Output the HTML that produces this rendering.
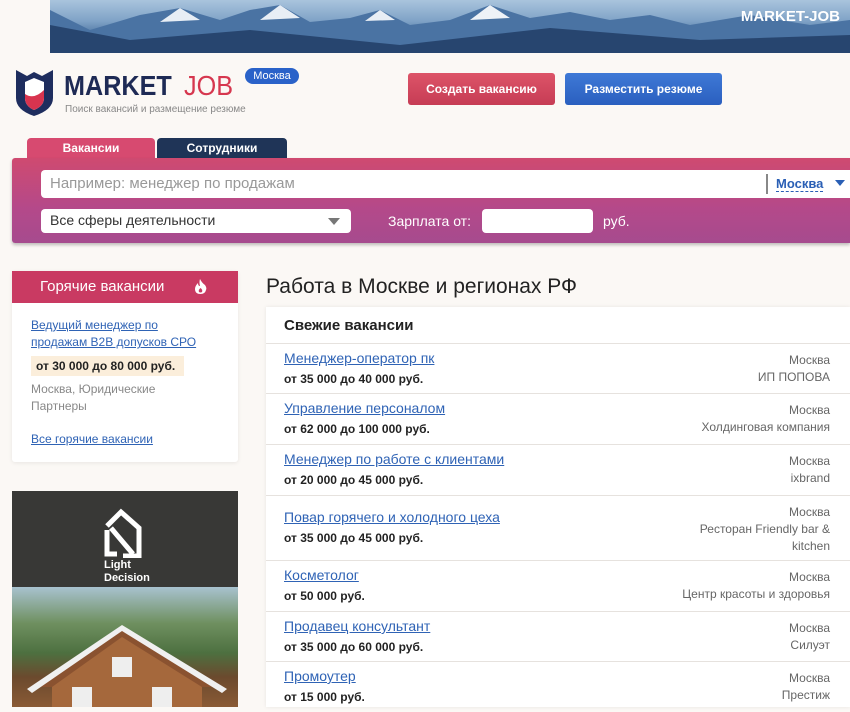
<!DOCTYPE html>
<html><head><meta charset="utf-8"><style>
*{margin:0;padding:0;box-sizing:border-box}
body{width:850px;height:707px;overflow:hidden;background:#fbf8f5;font-family:"Liberation Sans","Noto Sans CJK SC",sans-serif;position:relative}
.a{position:absolute}
.banner{left:50px;top:0;width:800px;height:53px;background:linear-gradient(180deg,#a9c4dd 0%,#7fa2c6 40%,#3d6797 75%,#2b4f7e 100%);overflow:hidden}
.btn{top:73px;height:32px;border-radius:3px;color:#fff;font-size:12px;font-weight:bold;text-align:center;line-height:32px}
a,.lnk{color:#2f63b5;text-decoration:underline}
.row{position:absolute;left:0;width:584px;border-top:1px solid #e6e2de}
.row .t{position:absolute;left:18px;top:6px;font-size:14px;color:#2f63b5;text-decoration:underline}
.row .s{position:absolute;left:18px;top:28px;font-size:12px;font-weight:bold;color:#222}
.row .r{position:absolute;right:20px;top:8px;font-size:12px;color:#666;text-align:right;line-height:17px}
</style></head><body>
<div class="a banner">
<svg width="800" height="53" style="position:absolute;left:0;top:0"><polygon points="0,10 40,30 90,15 130,8 170,20 200,10 230,5 260,22 300,18 330,10 360,25 400,20 440,5 480,18 520,12 560,20 600,15 640,25 700,15 760,25 800,20 800,53 0,53" fill="#4a73a3"/><polygon points="0,25 80,40 200,30 350,45 500,28 650,40 800,35 800,53 0,53" fill="#27456f"/><polygon points="130,8 150,20 110,22" fill="#e8eef5"/><polygon points="230,5 250,18 210,20" fill="#e8eef5"/><polygon points="440,5 460,18 420,20" fill="#eef2f7"/><polygon points="330,10 345,20 315,21" fill="#e8eef5"/></svg>
<div class="a" style="right:10px;top:8px;color:#fff;font-weight:bold;font-size:15px">MARKET-JOB</div>
</div>
<svg class="a" style="left:16px;top:70px" width="37" height="46" viewBox="0 0 37 46"><path d="M0 0 L11 6 L18 2 L26 6 L37 0 L37 28 Q37 40 18 46 Q0 40 0 28Z" fill="#1e2d5e"/><path d="M9 12 L18 8 L28 12 L28 28 Q28 36 18 40 Q9 36 9 28Z" fill="#fff"/><path d="M9 24 Q18 30 28 20 L28 28 Q28 36 18 40 Q9 36 9 28Z" fill="#d8344f"/></svg>
<div class="a" style="left:64px;top:71px;font-size:28px;line-height:30px;color:#1e2a55;font-weight:bold;transform:scaleX(0.9);transform-origin:left">MARKET</div>
<div class="a" style="left:184px;top:71px;font-size:28px;line-height:30px;color:#d6374f;transform:scaleX(0.9);transform-origin:left">JOB</div>
<div class="a" style="left:245px;top:68px;width:54px;height:16px;border-radius:8px;background:#2a62c9;color:#fff;font-size:11px;text-align:center;line-height:16px">Москва</div>
<div class="a" style="left:65px;top:104px;font-size:10px;color:#888">Поиск вакансий и размещение резюме</div>
<div class="a btn" style="left:408px;width:147px;background:linear-gradient(#dd5468,#c63c55)">Создать вакансию</div>
<div class="a btn" style="left:565px;width:157px;background:linear-gradient(#3f79d6,#2a5fbf)">Разместить резюме</div>
<div class="a" style="left:27px;top:138px;width:128px;height:21px;background:#d74a70;border-radius:4px 4px 0 0;color:#fff;font-size:12px;font-weight:bold;text-align:center;line-height:21px">Вакансии</div>
<div class="a" style="left:157px;top:138px;width:130px;height:20px;background:#1f3457;border-radius:4px 4px 0 0;color:#fff;font-size:12px;font-weight:bold;text-align:center;line-height:20px">Сотрудники</div>
<div class="a" style="left:12px;top:158px;width:838px;height:85px;background:linear-gradient(180deg,#cf4a70 0%,#b4498a 60%,#a64b8e 100%);border-radius:3px 0 0 3px;box-shadow:0 2px 3px rgba(0,0,0,.25)"></div>
<div class="a" style="left:41px;top:170px;width:809px;height:28px;background:#fff;border-radius:4px 0 0 4px"></div>
<div class="a" style="left:50px;top:175px;font-size:15px;color:#999">Например: менеджер по продажам</div>
<div class="a" style="left:766px;top:174px;width:2px;height:20px;background:#888"></div>
<div class="a" style="left:776px;top:176px;font-size:13px;font-weight:bold;color:#2a5fb5;border-bottom:1px dashed #2a5fb5">Москва</div>
<div class="a" style="left:835px;top:180px;width:0;height:0;border-left:5px solid transparent;border-right:5px solid transparent;border-top:6px solid #2a5fb5"></div>
<div class="a" style="left:41px;top:209px;width:310px;height:24px;background:#fff;border-radius:4px"></div>
<div class="a" style="left:50px;top:212px;font-size:14px;color:#333">Все сферы деятельности</div>
<div class="a" style="left:328px;top:218px;width:0;height:0;border-left:6px solid transparent;border-right:6px solid transparent;border-top:7px solid #777"></div>
<div class="a" style="left:388px;top:213px;font-size:14px;color:#fff">Зарплата от:</div>
<div class="a" style="left:482px;top:209px;width:111px;height:24px;background:#fff;border-radius:4px"></div>
<div class="a" style="left:603px;top:213px;font-size:14px;color:#fff">руб.</div>

<div class="a" style="left:12px;top:271px;width:226px;height:191px;background:#fff;border-radius:3px;box-shadow:0 1px 4px rgba(0,0,0,.08)"></div>
<div class="a" style="left:12px;top:271px;width:226px;height:32px;background:#c93a62;color:#fff;font-size:15px;line-height:32px;padding-left:28px">Горячие вакансии</div>
<svg class="a" style="left:194px;top:279px" width="13" height="15" viewBox="0 0 13 15"><path d="M6 0 Q8 4 11 6 Q13 9 12 11 Q11 15 6.5 15 Q1 15 1 10 Q1 7 4 4 Q4 7 6 7 Q5 3 6 0Z" fill="#fff"/><path d="M6.5 9 Q9 11 8 13 Q6.5 14 5 13 Q4 11 6.5 9Z" fill="#c93a62"/></svg>
<div class="a lnk" style="left:31px;top:317px;font-size:12px;line-height:17px">Ведущий менеджер по<br>продажам B2B допусков СРО</div>
<div class="a" style="left:31px;top:356px;width:153px;height:20px;background:#fbeedb;font-size:12px;font-weight:bold;line-height:20px;padding-left:5px;color:#222">от 30 000 до 80 000 руб.</div>
<div class="a" style="left:31px;top:381px;font-size:12px;line-height:17px;color:#888">Москва, Юридические<br>Партнеры</div>
<div class="a lnk" style="left:31px;top:432px;font-size:12px">Все горячие вакансии</div>

<div class="a" style="left:12px;top:491px;width:226px;height:96px;background:#383836"></div>
<svg class="a" style="left:103px;top:506px" width="40" height="52" viewBox="0 0 40 52"><path d="M4 20 L18 6 L36 22 L36 50 L20 50" fill="none" stroke="#fff" stroke-width="5"/><path d="M4 24 L4 48 L14 48 M8 22 L30 48" fill="none" stroke="#fff" stroke-width="5"/></svg>
<div class="a" style="left:104px;top:559px;color:#fff;font-size:11px;font-weight:bold;line-height:13px">Light<br>Decision</div>
<div class="a" style="left:12px;top:587px;width:226px;height:120px;background:linear-gradient(180deg,#a8c2cf 0%,#6f9060 30%,#4d7040 55%,#6b4a2e 75%,#8a5a35 100%)"></div>
<svg class="a" style="left:12px;top:587px" width="226" height="120"><polygon points="20,100 110,40 210,100" fill="#8a5230"/><polygon points="40,100 110,50 190,100 190,120 40,120" fill="#a5683c"/><polygon points="15,102 110,38 215,102 210,106 110,44 20,106" fill="#f0f0f0"/><rect x="60" y="100" width="20" height="20" fill="#eee"/><rect x="140" y="100" width="20" height="20" fill="#eee"/><rect x="100" y="70" width="20" height="20" fill="#eee"/></svg>

<div class="a" style="left:266px;top:275px;font-size:21px;color:#222">Работа в Москве и регионах РФ</div>
<div class="a" style="left:266px;top:307px;width:584px;height:400px;background:#fff;box-shadow:0 0 4px rgba(0,0,0,.08)">
<div class="a" style="left:18px;top:10px;font-size:15px;font-weight:bold;color:#222">Свежие вакансии</div>
<div class="row" style="top:36px;height:51px"><div class="t">Менеджер-оператор пк</div><div class="s">от 35 000 до 40 000 руб.</div><div class="r">Москва<br>ИП ПОПОВА</div></div>
<div class="row" style="top:86px;height:51px"><div class="t">Управление персоналом</div><div class="s">от 62 000 до 100 000 руб.</div><div class="r">Москва<br>Холдинговая компания</div></div>
<div class="row" style="top:137px;height:51px"><div class="t">Менеджер по работе с клиентами</div><div class="s">от 20 000 до 45 000 руб.</div><div class="r">Москва<br>ixbrand</div></div>
<div class="row" style="top:188px;height:65px"><div class="t" style="top:13px">Повар горячего и холодного цеха</div><div class="s" style="top:35px">от 35 000 до 45 000 руб.</div><div class="r">Москва<br>Ресторан Friendly bar &amp;<br>kitchen</div></div>
<div class="row" style="top:253px;height:51px"><div class="t">Косметолог</div><div class="s">от 50 000 руб.</div><div class="r">Москва<br>Центр красоты и здоровья</div></div>
<div class="row" style="top:304px;height:51px"><div class="t">Продавец консультант</div><div class="s">от 35 000 до 60 000 руб.</div><div class="r">Москва<br>Силуэт</div></div>
<div class="row" style="top:354px;height:51px"><div class="t">Промоутер</div><div class="s">от 15 000 руб.</div><div class="r">Москва<br>Престиж</div></div>
</div>
</body></html>
